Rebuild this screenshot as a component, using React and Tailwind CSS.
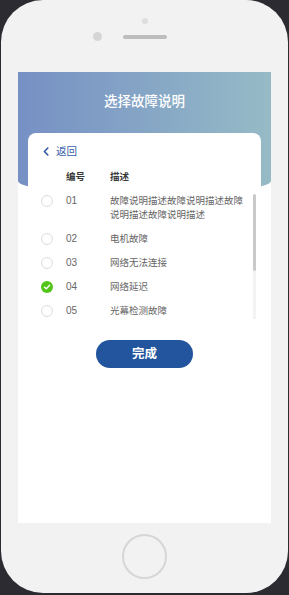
import React from 'react';

const font = { fontFamily: '"Liberation Sans", "Noto Sans CJK SC", sans-serif' };

const rows = [
  { id: '01', text: '故障说明描述故障说明描述故障说明描述故障说明描述' },
  { id: '02', text: '电机故障' },
  { id: '03', text: '网络无法连接' },
  { id: '04', text: '网络延迟', checked: true },
  { id: '05', text: '光幕检测故障' },
];

const Radio = ({ checked }) =>
  checked ? (
    <div className="w-[12px] h-[12px] mt-px rounded-full bg-[#52c41a] flex items-center justify-center shrink-0">
      <svg width="8" height="8" viewBox="0 0 8 8">
        <path d="M1.5 4.2 L3.3 5.8 L6.6 2.3" fill="none" stroke="#fff" strokeWidth="1.4" strokeLinecap="round" strokeLinejoin="round" />
      </svg>
    </div>
  ) : (
    <div className="w-[12px] h-[12px] mt-px rounded-full border border-[#dcdcdc] bg-white shrink-0" />
  );

export default function App() {
  return (
    <div className="h-[595px] bg-[#2c2b31]" style={font}>
      <div className="h-[593px] mx-px rounded-[42px] bg-[#f2f2f2] flex flex-col items-center">
        {/* top bezel */}
        <div className="h-[72px] w-full flex flex-col items-center">
          <div className="mt-[18px] w-[6px] h-[6px] rounded-full bg-[#dedede]" />
          <div className="mt-[8px] flex items-center">
            <div className="w-[9px] h-[9px] rounded-full bg-[#d6d6d6]" />
            <div className="w-[21px]" />
            <div className="w-[44px] h-[4px] rounded-full bg-[#bdbdbd]" />
            <div className="w-[30px]" />
          </div>
        </div>

        {/* screen */}
        <div className="w-[253px] h-[451px] bg-white flex flex-col">
          <div className="h-[123px] bg-gradient-to-r from-[#7690c4] to-[#96bbc6] rounded-b-[50%_14px] shrink-0">
            <div className="pt-[21px] text-center text-white text-[13.5px] leading-[18px] font-medium">选择故障说明</div>
          </div>

          <div className="relative -mt-[62px] mx-[10px] flex-1 bg-white rounded-t-[8px] flex flex-col">
            <div className="pt-[11px] pl-[15px] flex items-center gap-[7px] text-[#3560a8]">
              <svg width="6" height="9" viewBox="0 0 6 9">
                <path d="M4.8 1 L1.4 4.5 L4.8 8" fill="none" stroke="#2d5aa5" strokeWidth="1.6" strokeLinecap="round" strokeLinejoin="round" />
              </svg>
              <span className="text-[10.5px] leading-[14px]">返回</span>
            </div>

            <div className="mt-[12px] flex pl-[38px] text-[9.5px] leading-[14px] font-bold text-[#3a3a3a]">
              <div className="w-[44px]">编号</div>
              <div>描述</div>
            </div>

            <div className="mt-[5px] h-[130px] flex pr-[5px]">
              <div className="flex-1 overflow-hidden">
                {rows.map((r) => (
                  <div key={r.id} className="flex items-start py-[5px] pl-[13px] leading-[14px] text-[#666]">
                    <Radio checked={r.checked} />
                    <div className="w-[44px] ml-[13px] shrink-0 text-[10px]">{r.id}</div>
                    <div className="w-[136px] text-[9.5px]">{r.text}</div>
                  </div>
                ))}
              </div>
              <div className="w-[3px] flex flex-col">
                <div className="mt-[5px] h-[77px] bg-[#c9c9c9] rounded-full" />
                <div className="flex-1 bg-[#f3f3f3]" />
              </div>
            </div>

            <button className="mt-[21px] mx-auto w-[97px] h-[28px] rounded-full bg-[#22559e] text-white text-[12.5px] font-bold">
              完成
            </button>
          </div>
        </div>

        {/* home button */}
        <div className="mt-[11px] w-[45px] h-[45px] rounded-full border-2 border-[#d6d6d6]" />
      </div>
    </div>
  );
}
